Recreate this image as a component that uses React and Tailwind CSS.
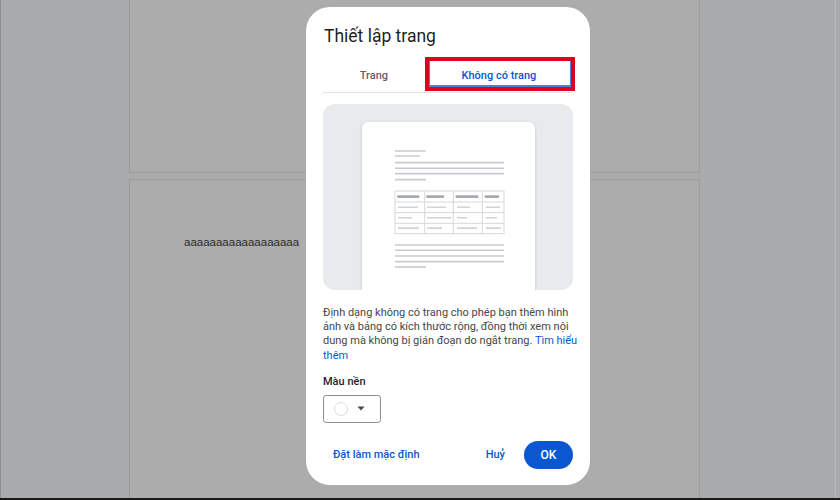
import React from "react";

// Google Docs "Page setup" dialog over a dimmed document
const tableCols = [33, 62.7, 91.3, 120.3, 142];
const headerBars = [
  [36.3, 56.3],
  [65.3, 81],
  [94.7, 115.3],
  [123.7, 136],
];
const rowBars = [
  [
    [36, 56],
    [65, 84],
    [95, 108],
    [124, 138],
  ],
  [
    [36, 50],
    [65, 89],
    [95, 105],
    [124, 135],
  ],
  [
    [36, 57],
    [65, 80],
    [95, 115],
    [124, 139],
  ],
];

function PagePreview() {
  const line = (y, x2) => (
    <line key={y} x1="33" x2={x2} y1={y} y2={y} stroke="#c8cacd" strokeWidth="1.6" />
  );
  return (
    <svg width="173" height="168" viewBox="0 0 173 168">
      {line(29, 63.7)}
      {line(34, 57.7)}
      {line(40.6, 142)}
      {line(46.3, 142)}
      {line(51.6, 142)}
      {line(57.6, 64)}

      <rect x="33" y="69" width="109" height="42.6" fill="none" stroke="#d6d8db" strokeWidth="1" />
      {[80, 90.6, 101.3].map((y) => (
        <line key={y} x1="33" x2="142" y1={y} y2={y} stroke="#d6d8db" strokeWidth="1" />
      ))}
      {tableCols.slice(1, 4).map((x) => (
        <line key={x} x1={x} x2={x} y1="69" y2="111.6" stroke="#d6d8db" strokeWidth="1" />
      ))}
      {headerBars.map(([a, b]) => (
        <line key={a} x1={a} x2={b} y1="74.6" y2="74.6" stroke="#a7abb0" strokeWidth="2.6" strokeLinecap="round" />
      ))}
      {rowBars.map((row, i) =>
        row.map(([a, b]) => (
          <line
            key={i + "-" + a}
            x1={a}
            x2={b}
            y1={85.3 + i * 10.4}
            y2={85.3 + i * 10.4}
            stroke="#d0d2d5"
            strokeWidth="1.6"
          />
        ))
      )}

      {line(123, 142)}
      {line(128.3, 142)}
      {line(134, 142)}
      {line(139.6, 142)}
      {line(145, 64)}
    </svg>
  );
}

export default function App() {
  return (
    <div className="relative w-[840px] h-[500px] overflow-hidden bg-[#a9aaab] font-['Roboto',sans-serif]">
      {/* Document behind the overlay */}
      <div className="flex h-full border-l border-[#8e8f90]">
        <div className="w-[128px] shrink-0" />
        <div className="w-[571px] shrink-0 flex flex-col gap-[6px]">
          <div className="h-[173px] bg-[#acacac] border-x border-b border-[#9c9c9c]" />
          <div className="flex-1 bg-[#acacac] border-x border-t border-[#9c9c9c] pl-[54px] pt-[55px]">
            <p className="font-['Liberation_Sans',Arial,sans-serif] text-[11.5px] leading-[14px] text-[#2a2a2a]">
              aaaaaaaaaaaaaaaaaa
            </p>
          </div>
        </div>
        <div className="flex-1 border-r border-[#b9b9b9] mr-[4px]" />
      </div>
      <div className="absolute left-0 right-0 bottom-0 h-[2px] bg-[#1a1a1a]" />

      {/* Dialog */}
      <div className="absolute left-[306px] top-[7px] w-[284px] h-[478px] bg-white rounded-[24px] px-[17px] pt-[17px] pb-[16px] flex flex-col">
        <h1 className="text-[17.5px] leading-[24px] text-[#1f1f1f] ml-[1px]">Thiết lập trang</h1>

        <div className="mt-[9px] flex h-[36px] border-b border-[#e3e3e3]">
          <button className="flex-auto pt-[3px] text-[11px] font-medium text-[#5f6368]">Trang</button>
          <button className="relative flex-auto pt-[3px] text-[11px] font-medium text-[#0b57d0]">
            Không có trang
            <span className="absolute left-0 -right-[2px] top-0 bottom-[1px] border-[4px] border-[#d9061f]">
              <span className="block h-full border-x border-b-2 border-[#4a7fd8]" />
            </span>
          </button>
        </div>

        <div className="mt-[11px] h-[186px] bg-[#e9eaed] rounded-[12px] flex justify-center pt-[18px] overflow-hidden">
          <div className="w-[173px] bg-white rounded-t-[6px] shadow-[0_1px_3px_rgba(60,64,67,0.25)]">
            <PagePreview />
          </div>
        </div>

        <p className="mt-[16px] text-[11px] leading-[14.2px] text-[#444746] whitespace-nowrap">
          Định dạng không có trang cho phép bạn thêm hình
          <br />
          ảnh và bảng có kích thước rộng, đồng thời xem nội
          <br />
          dung mà không bị gián đoạn do ngắt trang. <span className="text-[#0b57d0]">Tìm hiểu</span>
          <br />
          <span className="text-[#0b57d0]">thêm</span>
        </p>

        <div className="mt-[11px] text-[11px] leading-[16px] font-medium text-[#1f1f1f]">Màu nền</div>

        <button className="mt-[5px] w-[58px] h-[28px] border border-[#8e918f] rounded-[3px] flex items-center pl-[10px] gap-[9px]">
          <span className="w-[14px] h-[14px] rounded-full border border-[#dadce0] bg-white" />
          <svg width="8" height="5" viewBox="0 0 8 5">
            <path d="M0.5 0.5 L7.5 0.5 L4 4.5 Z" fill="#444746" />
          </svg>
        </button>

        <div className="mt-auto flex items-center h-[28px]">
          <button className="h-[28px] px-[10px] text-[11px] font-medium text-[#0b57d0]">Đặt làm mặc định</button>
          <div className="flex-1" />
          <button className="h-[28px] px-[10px] text-[11px] font-medium text-[#0b57d0]">Huỷ</button>
          <button className="ml-[9px] w-[49px] h-[28px] rounded-full bg-[#0b57d0] text-white text-[12px] font-medium">
            OK
          </button>
        </div>
      </div>
    </div>
  );
}
